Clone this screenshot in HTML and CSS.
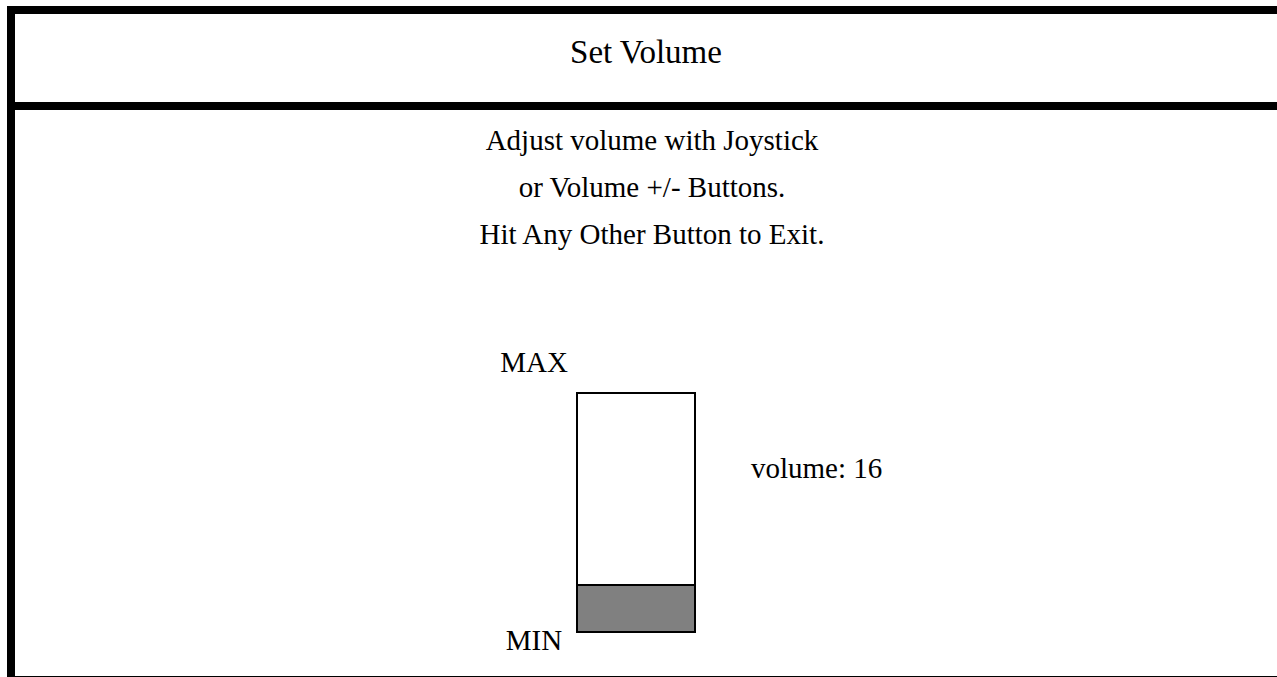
FILE: index.html
```html
<!DOCTYPE html>
<html lang="en">
<head>
  <meta charset="UTF-8">
  <title>Set Volume</title>
  <link rel="stylesheet" href="styles.css">
</head>
<body>

  <div class="screen">
    <div class="title-bar">
      <h1 class="title">Set Volume</h1>
    </div>

    <div class="panel">
      <div class="hint">
        <p>Adjust volume with Joystick</p>
        <p>or Volume +/- Buttons.</p>
        <p>Hit Any Other Button to Exit.</p>
      </div>

      <!-- Volume meter -->
      <div class="meter">
        <div class="meter-labels">
          <span>MAX</span>
          <span>MIN</span>
        </div>
        <div class="meter-bar">
          <div class="meter-fill" style="height: 20%"></div>
        </div>
        <div class="meter-readout">volume: 16</div>
      </div>
    </div>
  </div>

</body>
</html>
```

FILE: styles.css
```css
body {
  margin: 0;
  background: #fff;
  color: #000;
  font-family: "Liberation Serif", "Times New Roman", serif;
}

/* Outer frame: heavy top and left rules */
.screen {
  margin: 6px 0 0 7px;
  height: 663px;
  border-top: 8px solid #000;
  border-left: 8px solid #000;
  display: flex;
  flex-direction: column;
}

.title-bar {
  height: 88px;
  border-bottom: 8px solid #000;
  text-align: center;
}

.title {
  margin: 0;
  padding-top: 22px;
  font-size: 33px;
  line-height: 33px;
  font-weight: normal;
}

.panel {
  flex: 1;
  border-bottom: 1px solid #000;
}

.hint {
  padding: 7px 0 0 12px;
}

.hint p {
  margin: 0;
  font-size: 29px;
  line-height: 47px;
  text-align: center;
}

/* Meter */
.meter {
  display: flex;
  align-items: flex-start;
  margin: 90px 0 0 485px;
  font-size: 29px;
  line-height: 29px;
}

.meter-labels {
  width: 68px;
  height: 307px;
  display: flex;
  flex-direction: column;
  justify-content: space-between;
  align-items: center;
}

.meter-bar {
  width: 116px;
  height: 237px;
  margin: 44px 0 0 8px;
  border: 2px solid #000;
  display: flex;
  flex-direction: column;
  justify-content: flex-end;
}

.meter-fill {
  box-sizing: border-box;
  border-top: 2px solid #000;
  background: #808080;
}

.meter-readout {
  margin: 106px 0 0 55px;
}
```
